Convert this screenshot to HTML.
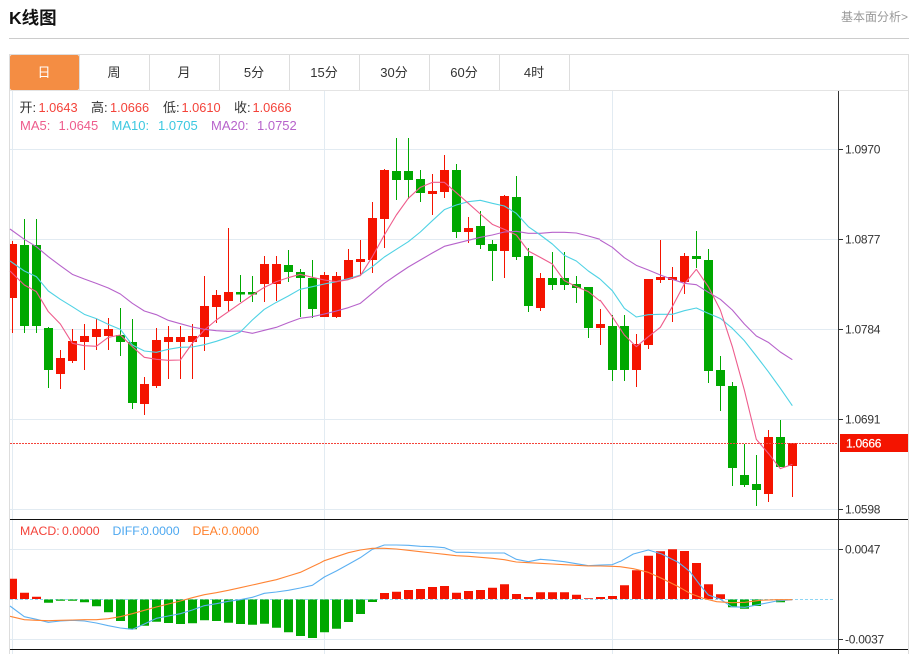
<!DOCTYPE html>
<html lang="zh">
<head>
<meta charset="utf-8">
<title>K线图</title>
<style>
html,body{margin:0;padding:0;background:#fff;width:916px;height:654px;overflow:hidden}
body{position:relative;font-family:"Liberation Sans","Noto Sans CJK SC",sans-serif}
svg{position:absolute;left:0;top:0}
.l{fill:none;stroke-width:1.1;vector-effect:non-scaling-stroke;stroke-linejoin:round}
.m5{stroke:#ee5c8c}.m10{stroke:#4fd2e4}.m20{stroke:#b763cb}.dif{stroke:#5cb0f2}.dea{stroke:#ff8434}
text{font-family:"Liberation Sans","Noto Sans CJK SC",sans-serif}
</style>
</head>
<body>
<svg width="916" height="654" viewBox="0 0 916 654" xmlns="http://www.w3.org/2000/svg">
<text x="9" y="24" font-size="17.5" font-weight="700" fill="#111">K线图</text>
<text x="841" y="21" font-size="12" fill="#999">基本面分析&gt;</text>
<rect x="9" y="38" width="900" height="1" fill="#ccc"/>

<!-- frame -->
<path d="M9.5 654V54.5H908.5V654" fill="none" stroke="#ddd"/>
<rect x="10" y="90" width="898" height="1" fill="#e4e4e4"/>
<rect x="10" y="55" width="69" height="35" rx="2" fill="#f48d43"/>
<path d="M79.5 55V90M149.5 55V90M219.5 55V90M289.5 55V90M359.5 55V90M429.5 55V90M499.5 55V90M569.5 55V90" stroke="#ddd"/>
<g font-size="13" text-anchor="middle" fill="#333">
<text x="44" y="77" fill="#fff">日</text>
<text x="114" y="77">周</text>
<text x="184" y="77">月</text>
<text x="254" y="77">5分</text>
<text x="324" y="77">15分</text>
<text x="394" y="77">30分</text>
<text x="464" y="77">60分</text>
<text x="534" y="77">4时</text>
</g>

<!-- grid -->
<path d="M10 149.5H838M10 239.5H838M10 329.5H838M10 419.5H838M10 509.5H838M10 549.5H838M10 639.5H838M12.5 91V654M324.5 91V654M612.5 91V654" stroke="#e2ebf2" fill="none"/>

<!-- candles -->
<svg x="10" y="91" width="828" height="428" viewBox="10 91 828 428" style="position:static">
<path stroke="#f41400" fill="none" d="M12.5 241V333M60.5 350V389M72.5 329V363M84.5 324V370M96.5 319V350M108.5 318V350M144.5 377V415M156.5 328V388M168.5 326V379M180.5 326V379M192.5 324V379M204.5 276V351M216.5 290V323M228.5 228V311M264.5 256V302M276.5 256V301M324.5 272V317M336.5 272V318M348.5 249V280M360.5 240V275M372.5 202V273M384.5 169V248M432.5 174V215M444.5 155V198M468.5 217V243M504.5 195V278M540.5 273V311M600.5 309V345M636.5 334V387M648.5 279V349M660.5 240V283M672.5 267V322M684.5 253V294M768.5 430V502M792.5 443V497"/>
<path fill="#f41400" d="M8 244h9v54h-9zM56 358h9v16h-9zM68 341h9v20h-9zM80 336h9v6h-9zM92 329h9v8h-9zM104 329h9v7h-9zM140 384h9v20h-9zM152 340h9v46h-9zM164 337h9v5h-9zM176 337h9v5h-9zM188 336h9v6h-9zM200 306h9v31h-9zM212 295h9v12h-9zM224 292h9v9h-9zM260 264h9v20h-9zM272 264h9v20h-9zM320 275h9v42h-9zM332 276h9v41h-9zM344 260h9v19h-9zM356 259h9v3h-9zM368 218h9v42h-9zM380 170h9v49h-9zM428 191h9v3h-9zM440 170h9v22h-9zM464 228h9v4h-9zM500 196h9v55h-9zM536 278h9v30h-9zM596 324h9v4h-9zM632 344h9v26h-9zM644 279h9v66h-9zM656 277h9v3h-9zM668 277h9v3h-9zM680 256h9v26h-9zM764 437h9v57h-9zM788 443h9v23h-9z"/>
<path stroke="#00a800" fill="none" d="M24.5 219V333M36.5 219V333M48.5 327V388M120.5 308V356M132.5 319V409M240.5 275V302M252.5 276V302M288.5 250V282M300.5 269V317M312.5 260V318M396.5 138V200M408.5 138V199M420.5 170V202M456.5 164V238M480.5 211V249M492.5 240V281M516.5 176V260M528.5 248V312M552.5 252V290M564.5 252V290M576.5 276V303M588.5 287V338M612.5 315V381M624.5 315V381M696.5 231V268M708.5 249V383M720.5 356V411M732.5 382V486M744.5 444V487M756.5 455V506M780.5 420V467"/>
<path fill="#00a800" d="M20 245h9v81h-9zM32 245h9v81h-9zM44 328h9v42h-9zM116 335h9v7h-9zM128 342h9v61h-9zM236 292h9v2.5h-9zM248 292h9v2.5h-9zM284 265h9v7h-9zM296 272h9v6h-9zM308 278h9v31h-9zM392 171h9v9h-9zM404 171h9v9h-9zM416 179h9v14h-9zM452 170h9v62h-9zM476 226h9v19h-9zM488 244h9v7h-9zM512 197h9v60h-9zM524 256h9v50h-9zM548 278h9v7h-9zM560 278h9v7h-9zM572 284h9v4h-9zM584 287h9v41h-9zM608 326h9v44h-9zM620 326h9v44h-9zM692 256h9v3h-9zM704 260h9v111h-9zM716 370h9v16h-9zM728 386h9v82h-9zM740 475h9v10h-9zM752 484h9v6h-9zM776 437h9v30h-9z"/>
</svg>

<!-- MA lines -->
<g transform="translate(0,130) scale(.33333)">
<polyline class="l m20" points="30,297 73,328 109,350 145,380 181,407 217,433 253,447 289,460 325,474 361,492 397,520 433,543 469,554 505,571 541,581 577,591 613,598 649,602 685,604 721,603 757,610 793,601 829,592 865,578 900,565"/>
<polyline class="l m10" points="30,393 73,423 109,440 145,483 181,508 217,530 253,553 289,566 325,583 361,598 397,645 433,663 469,667 505,658 541,652 577,651 613,644 649,634 685,622 721,606 757,570 793,538 829,517 865,498 900,478"/>
<polyline class="l m5" points="30,423 73,465 109,485 145,545 181,582 217,640 253,647 289,649 325,622 361,615 397,650 433,682 469,688 505,691 541,690 577,640 613,600 649,570 685,545 721,520 757,495 793,472 829,455 865,443 900,433"/>
</g>
<g transform="translate(300,130) scale(.33333)">
<polyline class="l m20" points="0,565 37,560 73,552 109,543 145,533 181,520 217,490 253,460 289,435 325,411 361,390 397,369 433,349 469,340 505,331 541,322 577,315 613,306 649,304 685,310 721,310 757,307 793,307 829,309 865,318 900,328"/>
<polyline class="l m10" points="0,478 37,470 73,462 109,455 145,446 181,435 217,410 253,381 289,358 325,335 361,306 397,272 433,239 469,225 505,215 541,211 577,220 613,228 649,250 685,290 721,315 757,342 793,376 829,393 865,423 900,447"/>
<polyline class="l m5" points="0,433 37,442 73,450 109,455 145,449 181,437 217,380 253,315 289,255 325,205 361,172 397,157 433,157 469,188 505,220 541,252 577,283 613,298 649,315 685,363 721,382 757,402 793,452 829,470 865,485 900,513"/>
</g>
<g transform="translate(580,220) scale(.33333)">
<polyline class="l m20" points="60,60 97,82 133,113 169,136 205,150 241,165 277,178 313,190 349,194 385,217 421,238 457,270 493,312 529,348 565,367 601,396 637,419"/>
<polyline class="l m10" points="60,177 97,212 133,265 169,291 205,284 241,283 277,283 313,272 349,264 385,280 421,295 457,325 493,362 529,408 565,455 601,505 637,557"/>
<polyline class="l m5" points="60,240 97,290 133,345 169,380 205,350 241,322 277,260 313,192 349,148 385,200 421,270 457,380 493,510 529,658 565,700 601,746 637,733"/>
</g>

<!-- current price line -->
<path d="M10 443.500H838" stroke="#f4433a" stroke-dasharray="2 1" fill="none"/>

<!-- MACD zero -->
<path d="M10 599.500H835" stroke="#8ed6f5" stroke-dasharray="3 2" fill="none"/>
<!-- MACD bars -->
<svg x="10" y="520" width="828" height="129" viewBox="10 520 828 129" style="position:static">
<path fill="#f41400" d="M8 578.7h9V599h-9zM20 592.7h9V599h-9zM32 596.7h9V599h-9zM380 593h9v6h-9zM392 591.7h9V599h-9zM404 590h9v9h-9zM416 589h9v10h-9zM428 587h9v12h-9zM440 586h9v13h-9zM452 592.7h9V599h-9zM464 591h9v8h-9zM476 590h9v9h-9zM488 587.7h9V599h-9zM500 584.3h9V599h-9zM512 594h9v5h-9zM524 597h9v2h-9zM536 592.3h9V599h-9zM548 592.3h9V599h-9zM560 592.3h9V599h-9zM572 594.7h9V599h-9zM584 598.3h9V599h-9zM596 597h9v2h-9zM608 596h9v3h-9zM620 585.3h9V599h-9zM632 570.3h9V599h-9zM644 555.7h9V599h-9zM656 551.3h9V599h-9zM668 549.3h9V599h-9zM680 551h9v48h-9zM692 563h9v36h-9zM704 584.3h9V599h-9zM716 594.3h9V599h-9z"/>
<path fill="#00a800" d="M44 599.5h9v3.2h-9zM56 599.5h9v1.2h-9zM68 599.5h9v1.2h-9zM80 599.5h9v2.8h-9zM92 599.5h9v6.8h-9zM104 599.5h9v12.8h-9zM116 599.5h9V621h-9zM128 599.5h9v29.8h-9zM140 599.5h9v26.2h-9zM152 599.5h9v22.2h-9zM164 599.5h9V623h-9zM176 599.5h9V624h-9zM188 599.5h9v23.8h-9zM200 599.5h9v20.8h-9zM212 599.5h9V621h-9zM224 599.5h9v23.2h-9zM236 599.5h9V624h-9zM248 599.5h9v25.2h-9zM260 599.5h9v24.2h-9zM272 599.5h9v28.2h-9zM284 599.5h9v32.8h-9zM296 599.5h9V636h-9zM308 599.5h9V638h-9zM320 599.5h9v32.8h-9zM332 599.5h9v29.2h-9zM344 599.5h9V622h-9zM356 599.5h9V614h-9zM368 599.5h9V602h-9zM728 599.5h9v7.8h-9zM740 599.5h9v9.2h-9zM752 599.5h9v6.5h-9zM764 599.5h9v.8h-9zM776 599.5h9v2.8h-9z"/>
</svg>

<!-- MACD lines -->
<g transform="translate(0,515) scale(.33333)">
<polyline class="l dif" points="30,273 73,305 109,313 145,322 181,318 217,316 253,318 289,324 325,332 361,339 397,343 433,327 469,310 505,303 541,296 577,285 613,272 649,266 685,259 721,254 757,247 793,235 829,231 865,226 901,219 937,211 960,195"/>
<polyline class="l dea" points="30,304 73,314 109,316 145,317 181,316 217,315 253,314 289,314 325,311 361,305 397,296 433,286 469,276 505,267 541,258 577,248 613,239 649,233 685,226 721,218 757,210 793,202 829,194 865,183 901,172 937,155 960,144"/>
</g>
<g transform="translate(310,515) scale(.33333)">
<polyline class="l dif" points="30,195 43,186 79,168 115,148 151,128 187,103 223,90 259,90 295,91 331,94 367,95 403,98 439,112 475,112 511,114 547,114 583,114 619,133 655,140 691,133 727,136 763,140 799,146 835,152 871,150 907,149 930,139"/>
<polyline class="l dea" points="30,144 43,137 79,125 115,113 151,105 187,100 223,100 259,102 295,106 331,110 367,114 403,118 439,122 475,124 511,127 547,130 583,134 619,141 655,143 691,145 727,147 763,149 799,151 835,153 871,153 907,154 930,155"/>
</g>
<g transform="translate(620,515) scale(.33333)">
<polyline class="l dif" points="0,140 40,117 85,105 125,117 175,142 210,170 240,210 265,240 300,252 335,275 375,277 420,268 470,258 517,254"/>
<polyline class="l dea" points="0,155 40,161 85,172 125,190 175,215 210,235 250,250 290,260 335,263 375,262 420,256 470,254 517,254"/>
</g>

<!-- axes -->
<path d="M10 519.500H908M10 649.500H908" stroke="#111" fill="none"/>
<path d="M838.500 91V654" stroke="#333" fill="none"/>
<path d="M838 149.500h5M838 239.500h5M838 329.500h5M838 419.500h5M838 509.500h5M838 549.500h5M838 639.500h5" stroke="#333" fill="none"/>
<rect x="840" y="434" width="68" height="18" fill="#f41400"/>
<g font-size="12" fill="#333" letter-spacing="-.25">
<text x="845" y="153.500">1.0970</text>
<text x="845" y="243.500">1.0877</text>
<text x="845" y="333.500">1.0784</text>
<text x="845" y="423.500">1.0691</text>
<text x="845" y="513.500">1.0598</text>
<text x="845" y="553.500">0.0047</text>
<text x="845" y="643.500">-0.0037</text>
<text x="846" y="447.500" fill="#fff" stroke="#fff" stroke-width=".2">1.0666</text>
</g>

<!-- legends -->
<g font-size="13" fill="#f4433a">
<text x="19.500" y="112" fill="#333">开:</text><text x="38.500" y="112" font-size="12.800">1.0643</text>
<text x="91" y="112" fill="#333">高:</text><text x="110" y="112" font-size="12.800">1.0666</text>
<text x="163" y="112" fill="#333">低:</text><text x="181.500" y="112" font-size="12.800">1.0610</text>
<text x="234" y="112" fill="#333">收:</text><text x="252.500" y="112" font-size="12.800">1.0666</text>
</g>
<g font-size="13">
<text x="20" y="130" fill="#ee5c8c">MA5:</text><text x="58.500" y="130" fill="#ee5c8c">1.0645</text>
<text x="111.500" y="130" fill="#3cc8e0">MA10:</text><text x="158" y="130" fill="#3cc8e0">1.0705</text>
<text x="211" y="130" fill="#b763cb">MA20:</text><text x="257" y="130" fill="#b763cb">1.0752</text>
</g>
<g font-size="12.300">
<text x="20" y="535" fill="#f4433a">MACD:</text><text x="62" y="535" fill="#f4433a">0.0000</text>
<text x="112.500" y="535" fill="#4da8f0">DIFF:</text><text x="142" y="535" fill="#4da8f0">0.0000</text>
<text x="192.500" y="535" fill="#ff7f2a">DEA:</text><text x="221.500" y="535" fill="#ff7f2a">0.0000</text>
</g>
</svg>
</body>
</html>
